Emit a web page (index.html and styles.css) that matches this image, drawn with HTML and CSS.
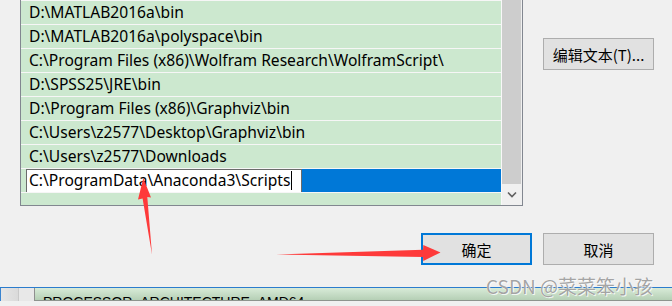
FILE: index.html
```html
<!DOCTYPE html>
<html lang="zh-CN">

<head>
    <meta charset="UTF-8">
    <title>编辑环境变量</title>
    <link rel="stylesheet" href="styles.css">
</head>

<body>
    <div class="dialog">
        <div class="top">
            <div class="listbox">
                <div class="items">
                    <div class="row">D:\MATLAB2016a\bin</div>
                    <div class="row">D:\MATLAB2016a\polyspace\bin</div>
                    <div class="row">C:\Program Files (x86)\Wolfram Research\WolframScript\</div>
                    <div class="row">D:\SPSS25\JRE\bin</div>
                    <div class="row">D:\Program Files (x86)\Graphviz\bin</div>
                    <div class="row">C:\Users\z2577\Desktop\Graphviz\bin</div>
                    <div class="row">C:\Users\z2577\Downloads</div>
                    <div class="row selected">
                        <div class="edit">C:\ProgramData\Anaconda3\Scripts<span class="caret"></span></div>
                        <div class="highlight"></div>
                    </div>
                    <div class="row empty"></div>
                </div>
                <div class="scrollbar">
                    <div class="thumb"></div>
                    <div class="arrow">
                        <svg width="10" height="7" viewBox="0 0 10 7">
                            <path d="M1 1.5 L5 5.5 L9 1.5" fill="none" stroke="#606060" stroke-width="1.6" />
                        </svg>
                    </div>
                </div>
            </div>
            <div class="side">
                <button class="btn">编辑文本(T)...</button>
            </div>
        </div>

        <div class="actions">
            <button class="btn default">确定</button>
            <button class="btn">取消</button>
        </div>
    </div>

    <div class="below">
        <div class="below-gutter"></div>
        <div class="below-list">
            <div class="below-text">PROCESSOR_ARCHITECTURE&nbsp;&nbsp;AMD64</div>
        </div>
    </div>

    <!-- annotation arrows drawn over the screenshot -->
    <svg class="arrows" width="672" height="306" viewBox="0 0 672 306">
        <polygon points="143.3,178 151,197.5 147.3,197 152,254.5 142.6,198.5 138,199.5" fill="#fe3a3a" />
        <polygon points="276,254.6 423,249.8 423.3,245 440.5,252.4 423.3,261 423,257" fill="#fe3a3a" />
    </svg>

    <div class="watermark">CSDN @菜菜笨小孩</div>
</body>

</html>
```

FILE: styles.css
```css
* {
    margin: 0;
    padding: 0;
    box-sizing: border-box;
}

body {
    width: 672px;
    height: 306px;
    overflow: hidden;
    position: relative;
    background: #f0f0f0;
    font-family: "Noto Sans", "Noto Sans CJK SC", sans-serif;
    color: #000;
}

.dialog {
    height: 287px;
}

.top {
    display: flex;
    align-items: flex-start;
}

.listbox {
    display: flex;
    width: 503px;
    height: 206px;
    margin-left: 20px;
    border: 1px solid #828790;
    border-top: none;
    background: #cce8cf;
}

.items {
    flex: 1;
    display: flex;
    flex-direction: column;
}

.row {
    height: 24px;
    border-top: 1px solid #f6f6f6;
    padding-left: 8px;
    font-size: 15.6px;
    line-height: 22px;
    white-space: nowrap;
    overflow: hidden;
}

.row.empty {
    flex: 1;
}

.row.selected {
    display: flex;
    padding-left: 5px;
}

.edit {
    width: 276px;
    height: 24px;
    border: 1px solid #6b6b6b;
    background: #fff;
    padding-left: 2px;
    line-height: 21px;
    position: relative;
}

.caret {
    display: inline-block;
    width: 1px;
    height: 19px;
    background: #000;
    vertical-align: -4px;
    margin-left: 1px;
}

.highlight {
    flex: 1;
    height: 23px;
    background: #0078d7;
}

.scrollbar {
    width: 21px;
    display: flex;
    flex-direction: column;
    border-left: 1px solid #f8f8f8;
    background: #f0f0f0;
}

.thumb {
    height: 184px;
    margin-right: 1px;
    background: #cdcdcd;
}

.arrow {
    flex: 1;
    display: flex;
    align-items: center;
    justify-content: center;
}

.side {
    padding: 38px 0 0 20px;
}

.btn {
    width: 111px;
    height: 32px;
    background: #e1e1e1;
    border: 1px solid #adadad;
    font-family: "Noto Sans CJK SC", sans-serif;
    font-size: 15px;
    color: #000;
}

.btn.default {
    border: 2px solid #0078d7;
}

.actions {
    display: flex;
    justify-content: flex-end;
    gap: 11px;
    padding-right: 18px;
    margin-top: 27px;
}

.below {
    display: flex;
    height: 14px;
    border-top: 1px solid #2b7ccd;
}

.below-gutter {
    width: 34px;
    background: linear-gradient(to right, #3a84cf 0, #3a84cf 1px, #e6e6e6 1px, #dadada 18px, #c9c9c9 18px, #c9c9c9 19px, #e8e8e8 19px);
}

.below-list {
    flex: 1;
    height: 13px;
    border-left: 1px solid #8f8f8f;
    border-bottom: 1px solid #8e948e;
    background: linear-gradient(#d8ebd8, #b5cfb5);
    overflow: hidden;
}

.below-text {
    padding: 7px 0 0 8px;
    font-family: "Liberation Sans", sans-serif;
    font-size: 14px;
    line-height: 14px;
    white-space: nowrap;
}

.arrows {
    position: absolute;
    left: 0;
    top: 0;
    pointer-events: none;
}

.watermark {
    position: absolute;
    left: 486px;
    top: 275px;
    font-family: "Noto Sans CJK SC", sans-serif;
    font-size: 19px;
    line-height: 22px;
    color: rgba(140, 140, 140, 0.8);
    text-shadow: 0 0 1px #fff, 1px 1px 0 rgba(255, 255, 255, 0.8);
    white-space: nowrap;
}
```
